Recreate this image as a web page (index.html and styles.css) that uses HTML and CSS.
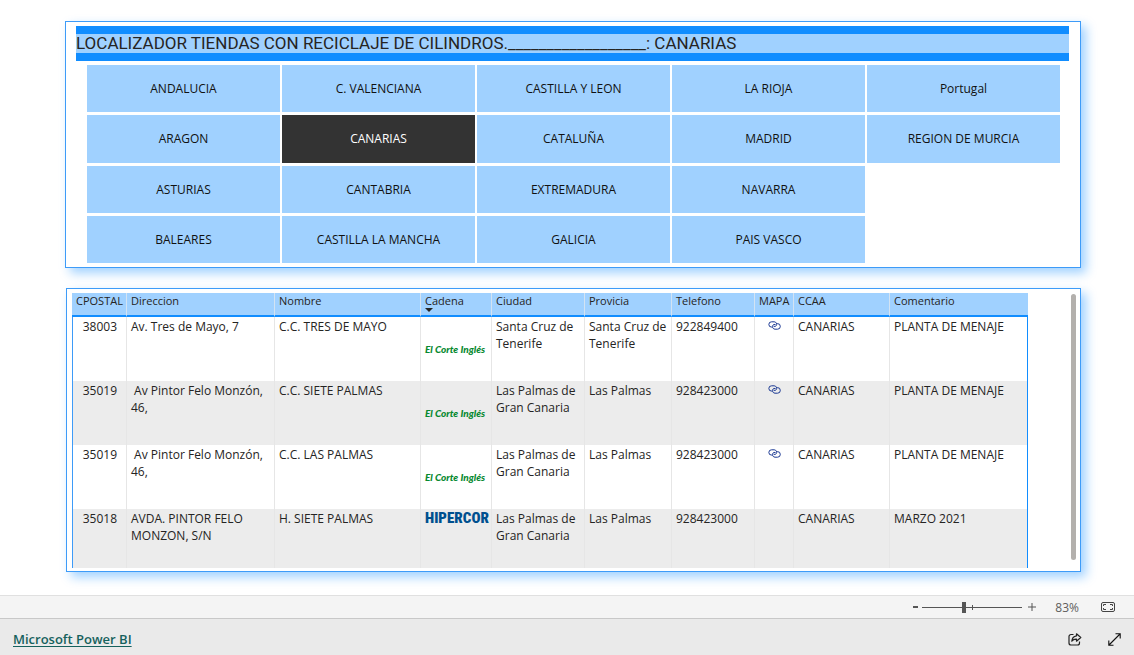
FILE: index.html
```html
<!DOCTYPE html>
<html lang="es">
<head>
<meta charset="utf-8">
<title>Localizador de tiendas</title>
<link rel="stylesheet" href="styles.css">
</head>
<body>
<svg class="defs" width="0" height="0" aria-hidden="true">
  <symbol id="link" viewBox="0 0 13 9">
    <g fill="none" stroke="#1c3a94" stroke-width="1">
      <path d="M4.2 6.1H3.6A2.7 2.6 0 0 1 3.6 .8H6.2A2.5 2.5 0 0 1 8.3 4.6Q7.4 5.8 5.6 5.3"/>
      <path d="M8.8 2.6H9.5A2.8 2.8 0 0 1 9.5 8.2H7A2.6 2.6 0 0 1 4.8 4.3Q5.7 3 7.5 3.5"/>
    </g>
  </symbol>
</svg>
<main class="report">
  <section class="panel filters">
    <h1 class="title">LOCALIZADOR TIENDAS CON RECICLAJE DE CILINDROS.__________________: CANARIAS</h1>
    <div class="tiles">
      <button class="tile">ANDALUCIA</button>
      <button class="tile">ARAGON</button>
      <button class="tile">ASTURIAS</button>
      <button class="tile">BALEARES</button>
      <button class="tile">C. VALENCIANA</button>
      <button class="tile selected" aria-pressed="true">CANARIAS</button>
      <button class="tile">CANTABRIA</button>
      <button class="tile">CASTILLA LA MANCHA</button>
      <button class="tile">CASTILLA Y LEON</button>
      <button class="tile">CATALUÑA</button>
      <button class="tile">EXTREMADURA</button>
      <button class="tile">GALICIA</button>
      <button class="tile">LA RIOJA</button>
      <button class="tile">MADRID</button>
      <button class="tile">NAVARRA</button>
      <button class="tile">PAIS VASCO</button>
      <button class="tile">Portugal</button>
      <button class="tile">REGION DE MURCIA</button>
    </div>
  </section>

  <section class="panel stores">
    <div class="viewport">
      <table class="grid">
        <colgroup>
          <col class="c-cp"><col class="c-dir"><col class="c-nom"><col class="c-cad"><col class="c-ciu">
          <col class="c-pro"><col class="c-tel"><col class="c-map"><col class="c-cca"><col class="c-com">
        </colgroup>
        <thead>
          <tr><th>CPOSTAL</th><th>Direccion</th><th>Nombre</th><th class="sorted">Cadena</th><th>Ciudad</th><th>Provicia</th><th>Telefono</th><th>MAPA</th><th>CCAA</th><th>Comentario</th></tr>
        </thead>
        <tbody>
          <tr><td class="num">38003</td><td>Av. Tres de Mayo, 7</td><td>C.C. TRES DE MAYO</td><td class="brand"><span class="eci">El Corte Inglés</span></td><td>Santa Cruz de Tenerife</td><td>Santa Cruz de Tenerife</td><td>922849400</td><td class="map"><a href="#mapa1" aria-label="Mapa"><svg width="13" height="9"><use href="#link"/></svg></a></td><td>CANARIAS</td><td>PLANTA DE MENAJE</td></tr>
          <tr><td class="num">35019</td><td>&nbsp;Av Pintor Felo Monzón, 46,</td><td>C.C. SIETE PALMAS</td><td class="brand"><span class="eci">El Corte Inglés</span></td><td>Las Palmas de Gran Canaria</td><td>Las Palmas</td><td>928423000</td><td class="map"><a href="#mapa2" aria-label="Mapa"><svg width="13" height="9"><use href="#link"/></svg></a></td><td>CANARIAS</td><td>PLANTA DE MENAJE</td></tr>
          <tr><td class="num">35019</td><td>&nbsp;Av Pintor Felo Monzón, 46,</td><td>C.C. LAS PALMAS</td><td class="brand"><span class="eci">El Corte Inglés</span></td><td>Las Palmas de Gran Canaria</td><td>Las Palmas</td><td>928423000</td><td class="map"><a href="#mapa3" aria-label="Mapa"><svg width="13" height="9"><use href="#link"/></svg></a></td><td>CANARIAS</td><td>PLANTA DE MENAJE</td></tr>
          <tr><td class="num">35018</td><td>AVDA. PINTOR FELO MONZON, S/N</td><td>H. SIETE PALMAS</td><td class="brand"><span class="hiper">HIPERCOR</span></td><td>Las Palmas de Gran Canaria</td><td>Las Palmas</td><td>928423000</td><td></td><td>CANARIAS</td><td>MARZO 2021</td></tr>
        </tbody>
      </table>
    </div>
    <div class="scrollbar"></div>
  </section>
</main>

<div class="zoombar">
  <button class="step minus" aria-label="Alejar"><svg width="5" height="2"><path d="M0 0H5V2H0Z" fill="#555"/></svg></button>
  <input class="zoom" type="range" min="0" max="100" value="41" aria-label="Zoom">
  <button class="step plus" aria-label="Acercar"><svg width="8" height="8"><path d="M0 4H8M4 0V8" stroke="#555"/></svg></button>
  <span class="percent">83%</span>
  <button class="fit" aria-label="Ajustar a la página"><svg width="15" height="11" fill="none" stroke="#444"><rect x=".5" y=".5" width="13" height="9" rx="1.5"/><path d="M5 2.5H2.5V4M2.5 6V7.5H5M9 2.5H11.500V4M11.500 6V7.500H9"/></svg></button>
</div>
<footer class="footer">
  <a class="brandlink" href="#powerbi">Microsoft Power BI</a>
  <button class="action" aria-label="Compartir"><svg width="14" height="13" fill="none" stroke="#222" stroke-width="1.200" stroke-linejoin="round"><path d="M5.500 1.500H3A2 2 0 0 0 1 3.500V10A2 2 0 0 0 3 12H9.500A2 2 0 0 0 11.500 10V8.500"/><path d="M8.500 .8L12.800 4.500L8.500 8.200V6.200Q5.500 6 3.800 8.200Q4.200 3.500 8.500 2.800Z"/></svg></button>
  <button class="action" aria-label="Pantalla completa"><svg width="13" height="13" fill="none" stroke="#111" stroke-width="1.100"><path d="M1 12L12 1M7.500 .8H12.200V5.500M.8 7.500V12.200H5.500"/></svg></button>
</footer>
</body>
</html>
```
FILE: styles.css
```css
* { box-sizing: border-box; }
body {
  margin: 0;
  min-height: 100vh;
  display: flex;
  flex-direction: column;
  background: #fff;
  color: #252423;
  font: 12px/17px "Open Sans", "Noto Sans", sans-serif;
}
button { border: 0; padding: 0; background: none; font: inherit; color: inherit; }
svg { display: block; }
.defs { position: absolute; }

.report {
  flex: 1;
  display: flex;
  flex-direction: column;
  gap: 20px;
  padding: 21px 53px 20px 65px;
}
.panel { border: 1px solid #3d9bf8; background: #fff; box-shadow: 5px 5px 10px rgba(17, 141, 255, .4); }

.filters { padding: 4px 11px 4px 10px; }
.title {
  margin: 0;
  border: solid #118dff;
  border-width: 8px 0;
  background: #a0d1ff;
  font: 400 17px/19px Roboto, "Open Sans", sans-serif;
  white-space: nowrap;
}
.tiles {
  height: 198px;
  margin: 4px 9px 0 11px;
  display: grid;
  grid-template-rows: repeat(4, 1fr);
  grid-auto-flow: column;
  grid-auto-columns: 1fr;
  gap: 3px 2px;
}
.tile { background: #a0d1ff; color: #111; }
.tile.selected { background: #333; color: #fff; }

.stores { display: flex; align-items: flex-start; padding: 4px 4px 3px 5px; margin-left: 1px; }
.viewport { flex: 1; height: 275px; overflow: hidden; }
.grid { width: 100%; table-layout: fixed; border-collapse: separate; border-spacing: 0; }
.c-cp { width: 55px; }
.c-dir { width: 148px; }
.c-nom { width: 146px; }
.c-cad { width: 71px; }
.c-ciu { width: 93px; }
.c-pro { width: 87px; }
.c-tel { width: 83px; }
.c-map { width: 39px; }
.c-cca { width: 96px; }
.c-com { width: 138px; }
th {
  height: 24px;
  padding: 0 0 7px 4px;
  background: #a0d1ff;
  border-right: 1px solid #d3e3f3;
  border-bottom: 2px solid #118dff;
  font-weight: 400;
  font-size: 11px;
  line-height: 15px;
  text-align: left;
  white-space: nowrap;
}
th:last-child { border-right: 0; }
.sorted { position: relative; }
.sorted::after {
  content: "";
  position: absolute;
  left: 4px;
  bottom: 3px;
  border: solid transparent;
  border-width: 4px 4px 0;
  border-top-color: #252423;
}
td { height: 64px; padding: 1px 3px 2px 4px; border-right: 1px solid #e6e6e6; vertical-align: top; }
td:first-child { border-left: 1px solid #3d9bf8; }
td:last-child { border-right-color: #118dff; }
tbody tr:nth-child(even) td { background: #ececec; }
.num { padding-right: 9px; text-align: right; }
.map svg { margin: 3px auto 0; }
.brand { padding: 1px 0 0 4px; white-space: nowrap; }
.eci {
  display: block;
  margin-top: 23px;
  color: #078930;
  font: italic 900 10px/17px Lato, "Liberation Sans", sans-serif;
}
.hiper {
  display: block;
  color: #00508f;
  font: 900 15px/16px "Roboto Condensed", Roboto, sans-serif;
}
.scrollbar { width: 5px; height: 266px; margin: 1px 0 0 43px; border-radius: 3px; background: #b3b0ad; }

.zoombar {
  height: 24px;
  display: flex;
  align-items: center;
  justify-content: flex-end;
  padding-right: 18px;
  border-top: 1px solid #e0e0e0;
  border-bottom: 1px solid #c8c8c8;
  background: #f4f4f4;
}
.zoom {
  appearance: none;
  width: 100px;
  height: 13px;
  margin: 0 6px 0 4px;
  background:
    linear-gradient(#555, #555) 50px 50% / 1px 5px no-repeat,
    linear-gradient(#555, #555) 0 50% / 100% 1px no-repeat;
}
.zoom::-webkit-slider-thumb { appearance: none; width: 4px; height: 11px; background: #555; }
.percent { margin-left: 19px; color: #605e5c; }
.fit { margin-left: 22px; }
.footer {
  height: 36px;
  display: flex;
  align-items: center;
  gap: 26px;
  padding: 4px 13px 0 13px;
  background: #eaeaea;
}
.brandlink { margin-right: auto; color: #16615d; font-size: 13px; font-weight: 600; text-underline-offset: 2px; }
```
